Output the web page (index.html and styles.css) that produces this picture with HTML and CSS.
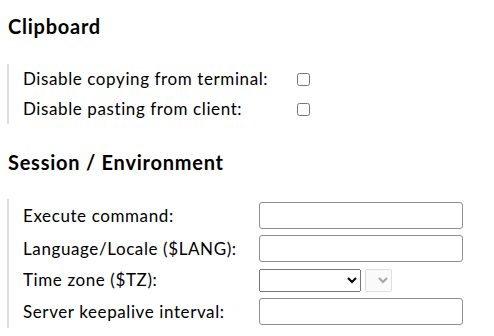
FILE: index.html
```html
<!DOCTYPE html>
<html>
<head>
<meta charset="utf-8">
<link rel="stylesheet" href="styles.css">
</head>
<body>
<div class="page">
  <h2 class="heading heading-first">Clipboard</h2>
  <div class="fields">
    <div class="label">Disable copying from terminal:</div>
    <div class="value"><input type="checkbox" class="check"></div>
    <div class="label">Disable pasting from client:</div>
    <div class="value"><input type="checkbox" class="check"></div>
  </div>
  <h2 class="heading">Session / Environment</h2>
  <div class="fields">
    <div class="label">Execute command:</div>
    <div class="value"><input type="text" class="text"></div>
    <div class="label">Language/Locale ($LANG):</div>
    <div class="value"><input type="text" class="text"></div>
    <div class="label">Time zone ($TZ):</div>
    <div class="value"><select class="sel"><option></option></select> <select class="sel sel-small" disabled><option></option></select></div>
    <div class="label">Server keepalive interval:</div>
    <div class="value"><input type="text" class="text"></div>
  </div>
</div>
</body>
</html>
```

FILE: styles.css
```css
html, body {
  margin: 0;
  padding: 0;
  background: #fff;
}
body {
  font-family: Lato, "Noto Sans", sans-serif;
  color: #000;
}
.page {
  padding: 0 0 0 7px;
}
.heading {
  font-size: 20px;
  letter-spacing: 0.75px;
  font-weight: bold;
  line-height: 24px;
  margin: 26px 0 25px 1px;
}
.heading-first {
  margin-top: 14px;
  margin-bottom: 26px;
}
.fields {
  display: grid;
  grid-template-columns: max-content max-content;
  column-gap: 22px;
  border-left: 2px solid #dddddd;
  padding-left: 14px;
  align-items: center;
}
.label {
  font-size: 17px;
  letter-spacing: 0.6px;
  line-height: 30px;
}
.value {
  padding: 3px 0;
  display: flex;
  align-items: center;
  gap: 4px;
}
.check {
  width: 13px;
  height: 13px;
  margin: 0 0 0 7px;
}
.text {
  box-sizing: border-box;
  width: 204px;
  height: 27px;
  margin: 0;
  border: 1px solid #8f8f8f;
  border-radius: 3px;
  font-family: inherit;
  font-size: 14px;
}
.sel {
  box-sizing: border-box;
  width: 102px;
  height: 23px;
  margin: 0;
  font-family: inherit;
  font-size: 13px;
}
.sel-small {
  width: 27px;
}
```
